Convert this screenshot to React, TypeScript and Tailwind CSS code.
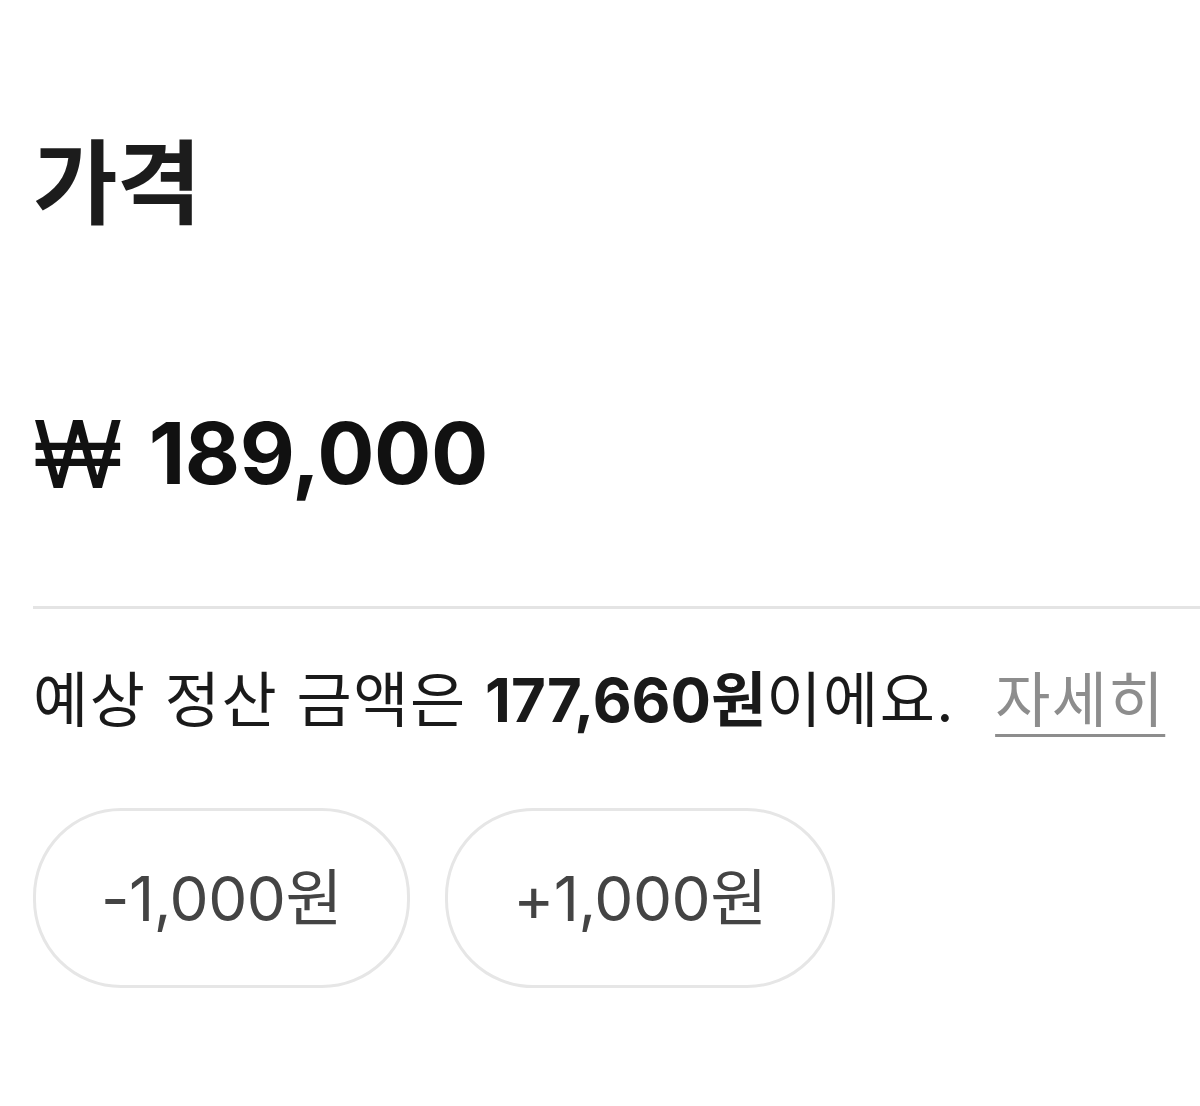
import React from "react";

const font = { fontFamily: 'Inter, "Noto Sans CJK KR", sans-serif' };

export default function App() {
  return (
    <div
      className="w-[1200px] h-[1106px] bg-white overflow-hidden text-[#1a1a1a]"
      style={font}
    >
      <div className="pl-[33px] pt-[124px]">
        <h1 className="text-[92px] leading-[120px] font-bold tracking-[-1px] text-[#1c1c1c]">
          가격
        </h1>
        <div className="mt-[160px] flex items-center h-[100px] font-bold text-[#111]">
          <span className="text-[94px] font-normal">₩</span>
          <span className="ml-[26px] text-[85px] tracking-[-0.5px]">189,000</span>
        </div>
        <div className="mt-[102px] h-[3px] bg-[#e4e4e4]" />
        <div className="mt-[51px] flex items-center h-[80px] text-[60px] text-[#1a1a1a] tracking-[1.5px]">
          <span>
            예상 정산 금액은 <span className="font-bold tracking-[0px]">177,660원</span>이에요.
          </span>
          <span className="ml-[40px] text-[#8d8d8d] underline decoration-[3px] underline-offset-[12px]">
            자세히
          </span>
        </div>
        <div className="mt-[68px] flex gap-[35px]">
          <button className="w-[377px] h-[180px] rounded-[88px] border-[3px] border-[#e6e6e6] bg-white text-[62px] text-[#444] tracking-[-0.5px]">
            -1,000원
          </button>
          <button className="w-[390px] h-[180px] rounded-[88px] border-[3px] border-[#e6e6e6] bg-white text-[62px] text-[#444] tracking-[-0.5px]">
            +1,000원
          </button>
        </div>
      </div>
    </div>
  );
}
